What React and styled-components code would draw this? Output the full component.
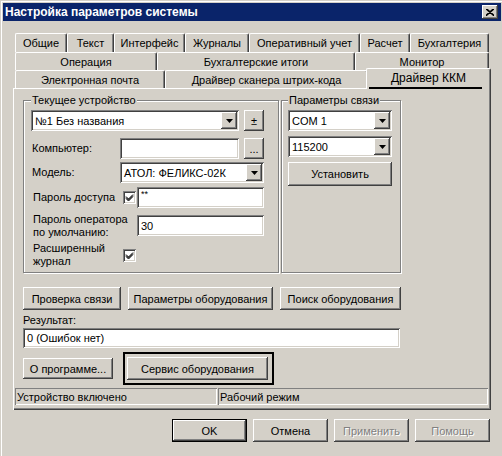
import React from 'react';
import styled, { createGlobalStyle } from 'styled-components';

const face = '#d4d0c8';
const raised = `box-shadow: inset -1px -1px #404040, inset 1px 1px #fff, inset -2px -2px #808080, inset 2px 2px ${face};`;
const sunken = `box-shadow: inset 1px 1px #808080, inset -1px -1px #fff, inset 2px 2px #404040, inset -2px -2px ${face};`;

const Global = createGlobalStyle`
  html, body { margin: 0; padding: 0; background: ${face}; }
  body { font-family: "Liberation Sans", Arial, sans-serif; font-size: 11px; color: #000; }
  * { box-sizing: border-box; }
`;

const Window = styled.div`
  width: 502px;
  height: 456px;
  background: ${face};
  padding: 3px 1px 0 3px;
  box-shadow: inset 1px 1px ${face}, inset 2px 2px #fff;
  overflow: hidden;
`;

const TitleBar = styled.div`
  height: 18px;
  background: #0a246a;
  display: flex;
  align-items: center;
  justify-content: space-between;
  padding: 0 3px 0 2px;
  color: #fff;
  font-weight: bold;
  font-size: 12px;
`;

const CloseButton = styled.div`
  width: 16px;
  height: 14px;
  background: ${face};
  ${raised}
  display: flex;
  align-items: center;
  justify-content: center;
`;

const TabControl = styled.div`
  margin: 12px 0 0 10px;
  width: 478px;
`;

const TabRow = styled.div`
  display: flex;
  height: ${p => p.$h}px;
  padding-left: 2px;
  align-items: flex-end;
`;

const Tab = styled.div`
  flex: 0 0 ${p => p.$w}px;
  height: ${p => p.$h}px;
  display: flex;
  align-items: center;
  justify-content: center;
  background: ${face};
  border-top: 1px solid #fff;
  border-left: 1px solid #fff;
  border-right: 1px solid #404040;
  box-shadow: inset -1px 0 #808080;
  border-top-left-radius: 2px;
  border-top-right-radius: 2px;
  white-space: nowrap;
`;

const ActiveTab = styled(Tab)`
  height: 21px;
  margin: 0 -2px -1px -2px;
  flex-basis: ${p => p.$w + 4}px;
  position: relative;
  z-index: 1;
  flex-direction: column;
  justify-content: flex-start;
  align-items: stretch;
  padding-top: 2px;
  font-size: 12px;
`;

const ActiveLabel = styled.div`
  text-align: center;
  line-height: 14px;
`;

const Underline = styled.div`
  height: 2px;
  background: #000;
  margin: 2px 8px 0 2px;
`;

const Panel = styled.div`
  height: 322px;
  padding: 12px 0 0 10px;
  background: ${face};
  box-shadow: inset 1px 1px #fff, inset -1px -1px #404040, inset -2px -2px #808080;
`;

const GroupRow = styled.div`
  display: flex;
  gap: 2px;
`;

const GroupBox = styled.div`
  width: ${p => p.$w}px;
  height: 173px;
  border: 1px solid #808080;
  box-shadow: inset 1px 1px #fff, 1px 1px #fff;
  padding-left: ${p => p.$pad}px;
  display: flex;
  flex-direction: column;
`;

const Legend = styled.div`
  align-self: flex-start;
  margin: -7px 0 0 ${p => p.$off || 0}px;
  padding: 0 1px;
  background: ${face};
  line-height: 13px;
  white-space: nowrap;
`;

const Row = styled.div`
  display: flex;
  align-items: center;
  height: ${p => p.$h || 21}px;
  margin-top: ${p => p.$mt || 0}px;
  gap: ${p => p.$gap || 0}px;
`;

const Label = styled.div`
  flex: none;
  width: ${p => p.$w}px;
  padding-left: ${p => p.$pl || 0}px;
  line-height: 13px;
`;

const Field = styled.div`
  flex: none;
  width: ${p => p.$w}px;
  height: ${p => p.$h || 21}px;
  background: #fff;
  ${sunken}
  display: flex;
  align-items: ${p => (p.$top ? 'flex-start' : 'center')};
  padding: 2px;
`;

const FieldText = styled.div`
  flex: 1;
  padding-left: 2px;
  white-space: nowrap;
  overflow: hidden;
  font-size: ${p => p.$size || 11}px;
  line-height: ${p => (p.$top ? '10px' : 'normal')};
`;

const DropButton = styled.div`
  flex: none;
  width: 16px;
  height: 100%;
  background: ${face};
  ${raised}
  display: flex;
  align-items: center;
  justify-content: center;
`;

const Button = styled.div`
  flex: none;
  width: ${p => p.$w}px;
  height: ${p => p.$h || 23}px;
  background: ${face};
  ${raised}
  display: flex;
  align-items: center;
  justify-content: center;
  white-space: nowrap;
  color: ${p => (p.$disabled ? '#808080' : '#000')};
  text-shadow: ${p => (p.$disabled ? '1px 1px 0 #fff' : 'none')};
`;

const DefaultButton = styled(Button)`
  border: 1px solid #000;
`;

const Check = styled.div`
  flex: none;
  width: 13px;
  height: 13px;
  background: #fff;
  ${sunken}
  display: flex;
  align-items: center;
  justify-content: center;
  margin-right: ${p => p.$mr || 0}px;
`;

const ButtonRow = styled.div`
  display: flex;
  gap: ${p => p.$gap || 7}px;
  margin-top: ${p => p.$mt || 0}px;
  align-items: center;
  justify-content: ${p => (p.$end ? 'flex-end' : 'flex-start')};
  padding-right: ${p => p.$pr || 0}px;
`;

const Caption = styled.div`
  margin-top: 4px;
  line-height: 13px;
`;

const FocusFrame = styled.div`
  border: 2px solid #000;
  padding: 3px 4px 3px 2px;
`;

const StatusBar = styled.div`
  display: flex;
  gap: 1px;
  margin: 3px 0 0 -8px;
  height: 17px;
`;

const StatusCell = styled.div`
  width: ${p => p.$w}px;
  box-shadow: inset 1px 1px #808080, inset -1px -1px #fff;
  padding-left: 2px;
  display: flex;
  align-items: center;
  white-space: nowrap;
`;

const Arrow = () => (
  <svg width="7" height="4" viewBox="0 0 7 4">
    <path d="M0 0h7L3.5 4z" fill="#000" />
  </svg>
);

const Tick = () => (
  <svg width="9" height="9" viewBox="0 0 9 9">
    <path d="M1 3.5l2.5 2.5L8 1.5M1 4.5l2.5 2.5L8 2.5M1 5.5l2.5 2.5L8 3.5" stroke="#000" strokeWidth="1" fill="none" />
  </svg>
);

const Combo = ({ w, text }) => (
  <Field $w={w}>
    <FieldText>{text}</FieldText>
    <DropButton><Arrow /></DropButton>
  </Field>
);

const row1 = [['Общие', 52], ['Текст', 47], ['Интерфейс', 71], ['Журналы', 64], ['Оперативный учет', 111], ['Расчет', 50], ['Бухгалтерия', 79]];
const row2 = [['Операция', 142], ['Бухгалтерские итоги', 198], ['Монитор', 134]];
const row3 = [['Электронная почта', 150], ['Драйвер сканера штрих-кода', 203]];

export default function App() {
  return (
    <>
      <Global />
      <Window>
        <TitleBar>
          <span>Настройка параметров системы</span>
          <CloseButton>
            <svg width="8" height="7" viewBox="0 0 8 7">
              <path d="M0 0l8 7M1 0l8 7M8 0L0 7M7 0L-1 7" stroke="#000" strokeWidth="1.1" />
            </svg>
          </CloseButton>
        </TitleBar>

        <TabControl>
          <TabRow $h={19}>
            {row1.map(([t, w]) => <Tab key={t} $w={w} $h={19}>{t}</Tab>)}
          </TabRow>
          <TabRow $h={18}>
            {row2.map(([t, w]) => <Tab key={t} $w={w} $h={18}>{t}</Tab>)}
          </TabRow>
          <TabRow $h={18}>
            {row3.map(([t, w]) => <Tab key={t} $w={w} $h={18}>{t}</Tab>)}
            <ActiveTab $w={121}>
              <ActiveLabel>Драйвер ККМ</ActiveLabel>
              <Underline />
            </ActiveTab>
          </TabRow>

          <Panel>
            <GroupRow>
              <GroupBox $w={256} $pad={7}>
                <Legend>Текущее устройство</Legend>
                <Row $mt={3} $gap={5}>
                  <Combo w={208} text="№1 Без названия" />
                  <Button $w={20} $h={21}>±</Button>
                </Row>
                <Row $mt={7}>
                  <Label $w={89} $pl={1}>Компьютер:</Label>
                  <Field $w={119} />
                  <Button $w={20} $h={21} style={{ marginLeft: 5 }}>...</Button>
                </Row>
                <Row $mt={3}>
                  <Label $w={89} $pl={1}>Модель:</Label>
                  <Combo w={144} text="АТОЛ: ФЕЛИКС-02К" />
                </Row>
                <Row $mt={4}>
                  <Label $w={92} $pl={2}>Пароль доступа</Label>
                  <Check $mr={1}><Tick /></Check>
                  <Field $w={127} $top><FieldText $size={9} $top>**</FieldText></Field>
                </Row>
                <Row $mt={7}>
                  <Label $w={106} $pl={2}>Пароль оператора<br />по умолчанию:</Label>
                  <Field $w={127}><FieldText>30</FieldText></Field>
                </Row>
                <Row $mt={6} $h={26}>
                  <Label $w={92} $pl={2}>Расширенный<br />журнал</Label>
                  <Check><Tick /></Check>
                </Row>
              </GroupBox>

              <GroupBox $w={120} $pad={6}>
                <Legend>Параметры связи</Legend>
                <Row $mt={3}>
                  <Combo w={104} text="COM 1" />
                </Row>
                <Row $mt={5}>
                  <Combo w={104} text="115200" />
                </Row>
                <Row $mt={5} $h={24}>
                  <Button $w={104} $h={24}>Установить</Button>
                </Row>
              </GroupBox>
            </GroupRow>

            <ButtonRow $mt={14}>
              <Button $w={98}>Проверка связи</Button>
              <Button $w={145}>Параметры оборудования</Button>
              <Button $w={121}>Поиск оборудования</Button>
            </ButtonRow>
            <Caption>Результат:</Caption>
            <Field $w={377} $h={20} style={{ marginTop: 1 }}>
              <FieldText>0 (Ошибок нет)</FieldText>
            </Field>
            <ButtonRow $mt={4} $gap={10}>
              <Button $w={90} $h={21}>О программе...</Button>
              <FocusFrame>
                <Button $w={141}>Сервис оборудования</Button>
              </FocusFrame>
            </ButtonRow>
            <StatusBar>
              <StatusCell $w={202}>Устройство включено</StatusCell>
              <StatusCell $w={270}>Рабочий режим</StatusCell>
            </StatusBar>
          </Panel>
        </TabControl>

        <ButtonRow $mt={9} $gap={6} $end $pr={11}>
          <DefaultButton $w={75}>OK</DefaultButton>
          <Button $w={75}>Отмена</Button>
          <Button $w={75} $disabled>Применить</Button>
          <Button $w={75} $disabled>Помощь</Button>
        </ButtonRow>
      </Window>
    </>
  );
}
